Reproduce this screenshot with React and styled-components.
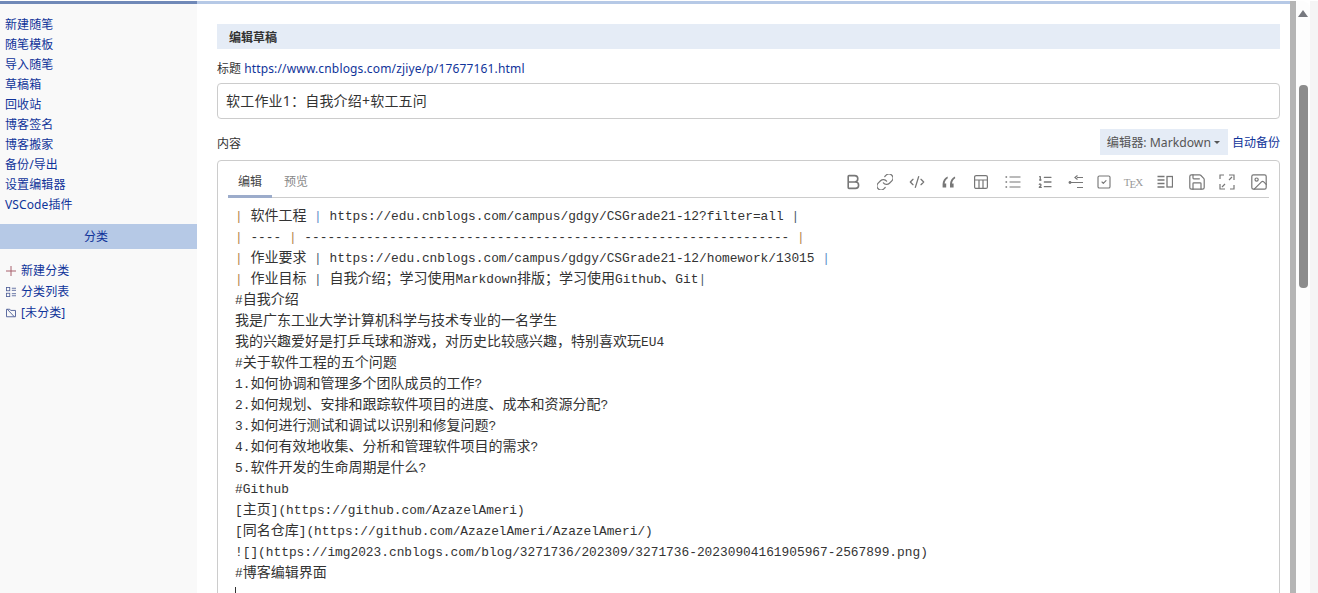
import React from 'react'
import styled, { createGlobalStyle } from 'styled-components'
import { Bold, Link as LinkIcon, CodeXml, ListOrdered, SquareCheck, Save, Image } from 'lucide-react'

const sans = `"Noto Sans", "Noto Sans CJK SC", sans-serif`

const Global = createGlobalStyle`
  html, body {
    margin: 0;
    height: 100%;
    overflow: hidden;
    background: #fff;
    font-family: ${sans};
    font-size: 13px;
  }
`

const sideLinks = ['新建随笔', '随笔模板', '导入随笔', '草稿箱', '回收站', '博客签名', '博客搬家', '备份/导出', '设置编辑器', 'VSCode插件']

const codeLines = [
  '| 软件工程 | https://edu.cnblogs.com/campus/gdgy/CSGrade21-12?filter=all |',
  '| ---- | --------------------------------------------------------------- |',
  '| 作业要求 | https://edu.cnblogs.com/campus/gdgy/CSGrade21-12/homework/13015 |',
  '| 作业目标 | 自我介绍；学习使用Markdown排版；学习使用Github、Git|',
  '#自我介绍',
  '我是广东工业大学计算机科学与技术专业的一名学生',
  '我的兴趣爱好是打乒乓球和游戏，对历史比较感兴趣，特别喜欢玩EU4',
  '#关于软件工程的五个问题',
  '1.如何协调和管理多个团队成员的工作?',
  '2.如何规划、安排和跟踪软件项目的进度、成本和资源分配?',
  '3.如何进行测试和调试以识别和修复问题?',
  '4.如何有效地收集、分析和管理软件项目的需求?',
  '5.软件开发的生命周期是什么?',
  '#Github',
  '[主页](https://github.com/AzazelAmeri)',
  '[同名仓库](https://github.com/AzazelAmeri/AzazelAmeri/)',
  '![](https://img2023.cnblogs.com/blog/3271736/202309/3271736-20230904161905967-2567899.png)',
  '#博客编辑界面',
]

// the table pipes come out tinted in the screenshot
const amber = '#b5864a'
const blue = '#5f90c8'
const slate = '#4f5d72'
const pipeTones = [
  [amber, blue, slate],
  [amber, amber, amber],
  [amber, slate, blue],
  [amber, slate, slate],
]

// latin runs are mono, han runs need their own font size
const renderCode = (line, lineIndex) => {
  const tones = pipeTones[lineIndex]
  let pipe = 0
  return line.split(/([\u3000-\u9fff\uff00-\uffef]+|\|)/).map((part, i) => {
    if (part === '|' && tones) {
      return <Pipe key={i} $tone={tones[pipe++]}>|</Pipe>
    }
    return i % 2 && part !== '|' ? <Han key={i}>{part}</Han> : part
  })
}

const Quote = () => (
  <svg viewBox="0 0 16 16" fill="currentColor">
    <path d="M6.6 2.4C3.6 3.8 1.6 6.6 1.6 10v3.6h3.6V9.4H3.6C3.8 7.2 5 5.4 6.8 4.2z" />
    <path d="M14 2.4C11 3.8 9 6.6 9 10v3.6h3.6V9.4H11C11.2 7.2 12.4 5.4 14.2 4.2z" />
  </svg>
)

const TableIcon = () => (
  <svg viewBox="0 0 16 16" fill="none" stroke="currentColor" strokeWidth="1.2">
    <rect x="1.6" y="1.6" width="12.8" height="12.8" rx="1.5" />
    <path d="M1.6 6h12.8M6 6v8.4M10 6v8.4" />
  </svg>
)

const BulletList = () => (
  <svg viewBox="0 0 16 16" fill="none" stroke="currentColor" strokeWidth="1.2">
    <path d="M4.5 3h11M4.5 8h11M4.5 13h11" />
    <path d="M0.5 3h1.6M0.5 8h1.6M0.5 13h1.6" strokeWidth="1.6" />
  </svg>
)

const Outdent = () => (
  <svg viewBox="0 0 16 16" fill="none" stroke="currentColor" strokeWidth="1.2">
    <circle cx="2" cy="8.5" r="1.4" fill="currentColor" stroke="none" />
    <path d="M3 8.5h12M9 3.5h6M9 13.5h6M9.5 1.5L7 3.5l2.5 2" />
  </svg>
)

const Columns = () => (
  <svg viewBox="0 0 16 16" fill="none" stroke="currentColor" strokeWidth="1.3">
    <path d="M0.5 2.5h7M0.5 6h7M0.5 9.5h7M0.5 13h7" />
    <rect x="10" y="2.5" width="5.5" height="10.5" />
  </svg>
)

const Fullscreen = () => (
  <svg viewBox="0 0 16 16" fill="none" stroke="currentColor" strokeWidth="1.2">
    <path d="M1 5V1h4M10 1h5v5M15 11v4h-4M6 15H1v-5" />
    <path d="M13 3L10 6M3 13l3-3" />
  </svg>
)

export default function App() {
  // viewBox trims lucide's built-in padding so the glyphs reach the reference size
  const tight = '2 2 20 20'
  const tools = [
    { icon: <Bold viewBox={tight} strokeWidth={2} />, gap: 0 },
    { icon: <LinkIcon viewBox={tight} strokeWidth={1.5} />, gap: 16 },
    { icon: <CodeXml strokeWidth={2} />, gap: 15.5 },
    { icon: <Quote />, gap: 16.5 },
    { icon: <TableIcon />, gap: 16 },
    { icon: <BulletList />, gap: 16 },
    { icon: <ListOrdered strokeWidth={1.9} />, gap: 16 },
    { icon: <Outdent />, gap: 15 },
    { icon: <SquareCheck strokeWidth={1.7} />, gap: 12 },
    { icon: <TexMark>T<sub>E</sub>X</TexMark>, gap: 13 },
    { icon: <Columns />, gap: 16 },
    { icon: <Save viewBox={tight} strokeWidth={1.5} />, gap: 16 },
    { icon: <Fullscreen />, gap: 14 },
    { icon: <Image viewBox={tight} strokeWidth={1.5} />, gap: 16 },
  ]

  return (
    <Page>
      <Global />
      <Sidebar>
        <SideLinks>
          {sideLinks.map((text) => (
            <SideLink key={text} href="#">{text}</SideLink>
          ))}
        </SideLinks>
        <SideHeading>分类</SideHeading>
        <CategoryList>
          <CategoryItem>
            <CategoryIcon $tone="#a8606c">
              <svg viewBox="0 0 10 10" fill="none" stroke="currentColor">
                <path d="M5 0v10M0 5h10" />
              </svg>
            </CategoryIcon>
            <SideLink href="#">新建分类</SideLink>
          </CategoryItem>
          <CategoryItem>
            <CategoryIcon>
              <svg viewBox="0 0 12 12" fill="none" stroke="currentColor">
                <rect x="0.5" y="0.5" width="4" height="4" />
                <rect x="0.5" y="7.5" width="4" height="4" />
                <path d="M7 1.5h5M7 4h5M7 8h5M7 10.5h5" />
              </svg>
            </CategoryIcon>
            <SideLink href="#">分类列表</SideLink>
          </CategoryItem>
          <CategoryItem>
            <CategoryIcon>
              <svg viewBox="0 0 12 12" fill="none" stroke="currentColor" strokeWidth="1.1">
                <path d="M0.6 1.5h4l1 1.4h5.8v7.6H0.6zM1.5 1.5l8.5 9" />
              </svg>
            </CategoryIcon>
            <SideLink href="#">[未分类]</SideLink>
          </CategoryItem>
        </CategoryList>
      </Sidebar>

      <Main>
        <PageTitle>编辑草稿</PageTitle>
        <FieldLabel>
          标题 <TitleLink href="#">https://www.cnblogs.com/zjiye/p/17677161.html</TitleLink>
        </FieldLabel>
        <TitleInput readOnly value="软工作业1：自我介绍+软工五问" />
        <ContentHead>
          <ContentLabel>内容</ContentLabel>
          <EditorPicker>编辑器: Markdown<Caret /></EditorPicker>
          <BackupLink href="#">自动备份</BackupLink>
        </ContentHead>
        <EditorBox>
          <EditorBar>
            <Tab $active>编辑</Tab>
            <Tab>预览</Tab>
            <Toolbar>
              {tools.map((tool, i) => (
                <Tool key={i} $gap={tool.gap}>{tool.icon}</Tool>
              ))}
            </Toolbar>
          </EditorBar>
          <Code>
            {codeLines.map((line, i) => (
              <CodeLine key={i}>{renderCode(line, i)}</CodeLine>
            ))}
            <CodeLine><TextCursor /></CodeLine>
          </Code>
        </EditorBox>
      </Main>

      <InnerRail />
      <ScrollTrack>
        <ScrollArrow />
        <ScrollThumb />
      </ScrollTrack>
      <PageEdge />
    </Page>
  )
}

const Page = styled.div`
  display: flex;
  box-sizing: border-box;
  height: 100vh;
  padding-top: 1px;
  overflow: hidden;
`

const Sidebar = styled.aside`
  flex: 0 0 197px;
  box-sizing: border-box;
  background: #f9f9f9;
  border-top: 3px solid #7089b8;
`

const SideLinks = styled.nav`
  display: flex;
  flex-direction: column;
  padding: 11px 0 9px 5px;
`

const SideLink = styled.a`
  color: #10349a;
  text-decoration: none;
  font-size: 12px;
  line-height: 20px;
  letter-spacing: 0.1px;
`

const SideHeading = styled.div`
  height: 25px;
  padding-right: 5px;
  line-height: 25px;
  background: #b6c9e6;
  color: #10349a;
  text-align: center;
  font-size: 12px;
`

const CategoryList = styled.div`
  display: flex;
  flex-direction: column;
  padding: 11px 0 0 6px;
`

const CategoryItem = styled.div`
  display: flex;
  align-items: center;
  gap: 5px;
  height: 21px;
`

const CategoryIcon = styled.span`
  display: flex;
  width: 10px;
  height: 10px;
  color: ${(p) => p.$tone || '#4f5f98'};

  svg {
    width: 100%;
    height: 100%;
  }
`

const Main = styled.main`
  flex: 1;
  min-width: 0;
  box-sizing: border-box;
  padding: 20px 10px 0 20px;
  border-top: 3px solid #b6c9e6;
  color: #333;
`

const PageTitle = styled.h2`
  margin: 0;
  height: 25px;
  padding-left: 12px;
  line-height: 27px;
  background: #e5ecf6;
  font-size: 12px;
  font-weight: 600;
`

const FieldLabel = styled.div`
  margin-top: 10px;
  line-height: 20px;
  font-size: 12px;
`

const TitleLink = styled.a`
  color: #10349a;
  text-decoration: none;
  letter-spacing: 0.155px;
`

const TitleInput = styled.input`
  display: block;
  width: 100%;
  box-sizing: border-box;
  height: 36px;
  margin-top: 4px;
  padding: 0 8px 2px;
  border: 1px solid #ccc;
  border-radius: 4px;
  outline: none;
  font-family: ${sans};
  font-size: 14px;
  letter-spacing: 0.2px;
  color: #333;
`

const ContentHead = styled.div`
  display: flex;
  align-items: center;
  height: 26px;
  margin-top: 10px;
`

const ContentLabel = styled.span`
  flex: 1;
  font-size: 12px;
  padding-top: 2px;
`

const EditorPicker = styled.div`
  display: flex;
  align-items: center;
  gap: 3px;
  height: 26px;
  padding: 0 8px 0 7px;
  background: #e5ecf6;
  color: #555;
  font-size: 12.2px;
`

const Caret = styled.i`
  border: 3px solid transparent;
  border-top-color: #555;
  border-bottom-width: 0;
`

const BackupLink = styled(TitleLink)`
  margin-left: 4px;
  font-size: 12px;
  letter-spacing: 0;
`

const EditorBox = styled.section`
  height: 700px;
  margin-top: 5px;
  padding: 0 10px;
  border: 1px solid #ccc;
  border-radius: 4px;
`

const EditorBar = styled.div`
  display: flex;
  align-items: center;
  height: 36px;
  border-bottom: 1px solid #ccc;
`

const Tab = styled.div`
  box-sizing: border-box;
  width: ${(p) => (p.$active ? '44px' : 'auto')};
  height: 37px;
  margin-left: ${(p) => (p.$active ? '0' : '12px')};
  line-height: 41px;
  text-align: center;
  font-size: 12px;
  color: ${(p) => (p.$active ? '#444' : '#888')};
  border-bottom: ${(p) => (p.$active ? '3px solid #9caccb' : 'none')};
`

const Toolbar = styled.div`
  display: flex;
  align-items: center;
  margin-left: auto;
  margin-right: 2px;
  padding-top: 6px;
`

const Tool = styled.span`
  display: flex;
  align-items: center;
  justify-content: center;
  width: 16px;
  height: 16px;
  margin-left: ${(p) => p.$gap}px;
  color: #777;

  svg {
    width: 100%;
    height: 100%;
  }
`

const TexMark = styled.span`
  font-family: "Liberation Serif", serif;
  font-size: 11px;
  letter-spacing: -1px;
  color: #999;
  white-space: nowrap;

  sub {
    font-size: 11px;
    line-height: 0;
    vertical-align: -2px;
  }
`

const Code = styled.div`
  padding: 8px 0 0 7px;
  font-family: "Liberation Mono", monospace;
  font-size: 12.83px;
  color: #333;
`

const CodeLine = styled.div`
  height: 21px;
  line-height: 21px;
  white-space: pre;
`

const Han = styled.span`
  font-family: "Noto Sans CJK SC", sans-serif;
  font-size: 14px;
  line-height: 0;
`

const Pipe = styled.span`
  color: ${(p) => p.$tone};
`

const TextCursor = styled.i`
  display: inline-block;
  width: 1px;
  height: 16px;
  background: #333;
  vertical-align: middle;
`

const InnerRail = styled.div`
  flex: 0 0 6px;
  background: #b5b5b5;
`

const ScrollTrack = styled.div`
  flex: 0 0 14px;
  display: flex;
  flex-direction: column;
  align-items: center;
  background: #fdfdfd;
  border-top-right-radius: 8px;
`

const ScrollArrow = styled.i`
  margin-top: 9px;
  border: 5px solid transparent;
  border-top-width: 0;
  border-bottom: 7px solid #77797f;
`

const ScrollThumb = styled.div`
  width: 9px;
  height: 203px;
  margin-top: 68px;
  border-radius: 4px;
  background: #8c8c8c;
`

const PageEdge = styled.div`
  flex: 0 0 8px;
  background: #f5f5f5;
`
